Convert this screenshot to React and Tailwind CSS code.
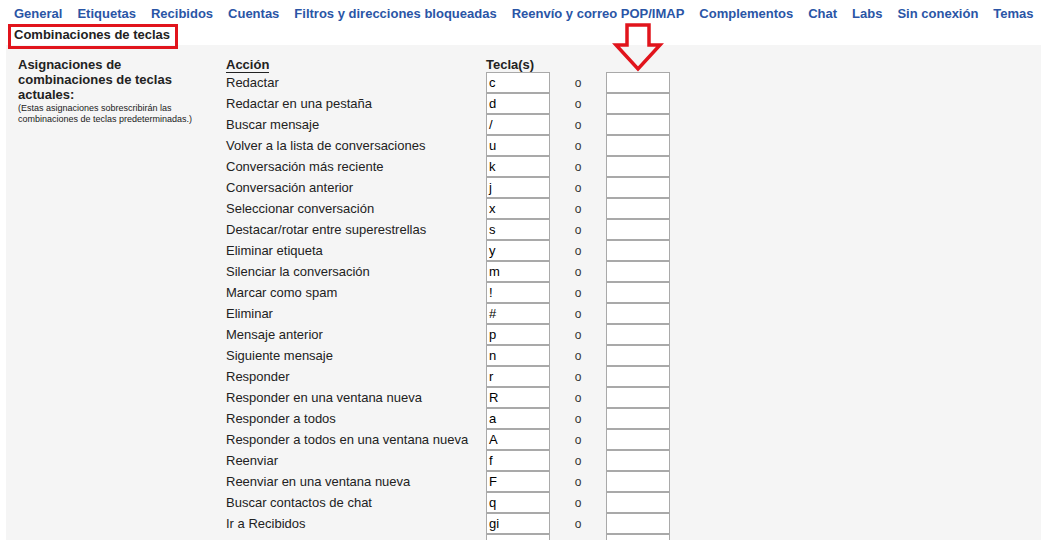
import React from 'react';

const NAV = [
    'General', 'Etiquetas', 'Recibidos', 'Cuentas', 'Filtros y direcciones bloqueadas',
    'Reenvío y correo POP/IMAP', 'Complementos', 'Chat', 'Labs', 'Sin conexión', 'Temas'
];

const SHORTCUTS = [
    ['Redactar', 'c'],
    ['Redactar en una pestaña', 'd'],
    ['Buscar mensaje', '/'],
    ['Volver a la lista de conversaciones', 'u'],
    ['Conversación más reciente', 'k'],
    ['Conversación anterior', 'j'],
    ['Seleccionar conversación', 'x'],
    ['Destacar/rotar entre superestrellas', 's'],
    ['Eliminar etiqueta', 'y'],
    ['Silenciar la conversación', 'm'],
    ['Marcar como spam', '!'],
    ['Eliminar', '#'],
    ['Mensaje anterior', 'p'],
    ['Siguiente mensaje', 'n'],
    ['Responder', 'r'],
    ['Responder en una ventana nueva', 'R'],
    ['Responder a todos', 'a'],
    ['Responder a todos en una ventana nueva', 'A'],
    ['Reenviar', 'f'],
    ['Reenviar en una ventana nueva', 'F'],
    ['Buscar contactos de chat', 'q'],
    ['Ir a Recibidos', 'gi'],
    ['Ir a Conversaciones destacadas', 'gs'],
];

const KeyBox = ({ value }) => (
    <div className="h-[21px] w-[64px] bg-white border border-[#a9a9a9] px-[2px] leading-[19px] text-[13px] text-black">
        {value}
    </div>
);

export default function App() {
    return (
        <div className="relative h-[540px] w-[1041px] overflow-hidden bg-white font-['Liberation_Sans',Arial,sans-serif]">
            {/* Tabs */}
            <div className="flex gap-[15px] pl-[14px] pt-[6px] h-[24px] text-[13px] leading-[16px] font-bold text-[#2a55a6] whitespace-nowrap">
                {NAV.map(n => (
                    <span key={n}>{n}</span>
                ))}
            </div>
            <div className="pl-[14px] h-[21px] pt-[3px] text-[13px] leading-[16px] font-bold text-[#222]">
                Combinaciones de teclas
            </div>

            {/* Settings panel */}
            <div className="ml-[6px] bg-[#f5f5f5] pt-[12px] pl-[12px] flex min-h-[495px]">
                <div className="w-[208px] shrink-0">
                    <div className="text-[13px] leading-[15px] font-bold text-[#222] pr-[20px]">
                        Asignaciones de combinaciones de teclas actuales:
                    </div>
                    <div className="text-[9px] leading-[11px] text-[#222] mt-[1px]">
                        (Estas asignaciones sobrescribirán las combinaciones de teclas predeterminadas.)
                    </div>
                </div>
                <div className="flex flex-col text-[13px] text-[#222]">
                    <div className="flex h-[15px] items-end leading-[15px] font-bold">
                        <span className="w-[260px]"><span className="border-b border-[#222]">Acción</span></span>
                        <span>Tecla(s)</span>
                    </div>
                    {SHORTCUTS.map(([label, key]) => (
                        <div key={label} className="flex h-[21px] items-center">
                            <span className="w-[260px] leading-[21px]">{label}</span>
                            <KeyBox value={key} />
                            <span className="w-[56px] text-center text-[12px] text-[#333]">o</span>
                            <KeyBox value="" />
                        </div>
                    ))}
                </div>
            </div>

            {/* Annotation overlay */}
            <div className="absolute left-[8px] top-[24px] w-[170px] h-[25px] border-[3px] border-[#e1141c]" />
            <svg className="absolute left-[612px] top-[22px]" width="52" height="50" viewBox="0 0 52 50">
                <path d="M15 3 H37 V23 H48 L26 47 L4 23 H15 Z" fill="none" stroke="#e1141c" strokeWidth="3.5" strokeLinejoin="miter" />
            </svg>
        </div>
    );
}
